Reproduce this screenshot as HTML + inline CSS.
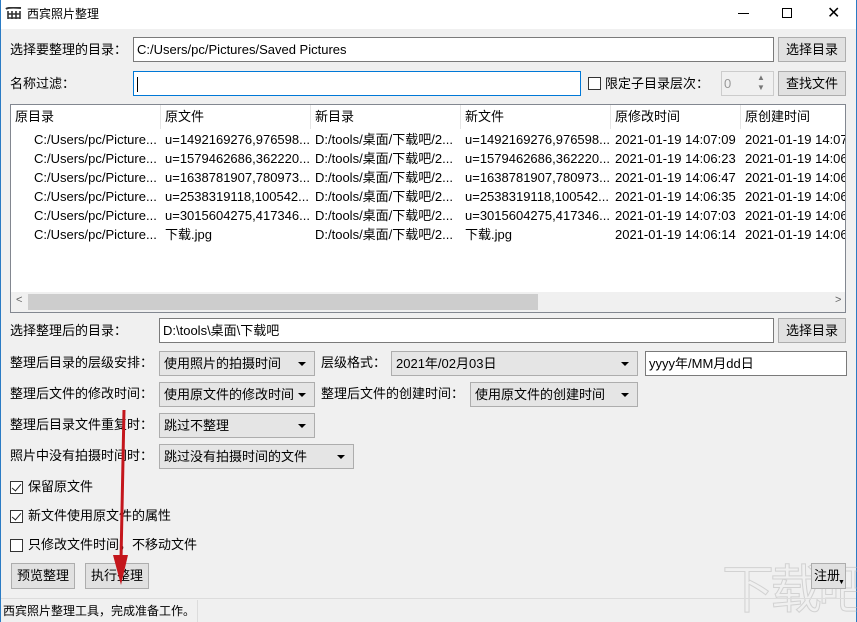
<!DOCTYPE html>
<html><head><meta charset="utf-8">
<style>
*{box-sizing:border-box;margin:0;padding:0}
body{width:857px;height:622px;overflow:hidden;background:#f0f0f0;font-family:"Liberation Sans","Noto Sans CJK SC",sans-serif;font-size:13px;color:#000;position:relative}
.a{position:absolute;white-space:nowrap}
.t{line-height:16px}
.in{position:absolute;background:#fff;border:1px solid #7a7a7a;padding-left:3px;line-height:23px;white-space:nowrap;overflow:hidden}
.bt{position:absolute;background:#e1e1e1;border:1px solid #adadad;text-align:center;line-height:23px;white-space:nowrap}
.sel{position:absolute;background:#e5e5e5;border:1px solid #adadad;padding-left:4px;line-height:23px;white-space:nowrap}
.sel:after{content:"";position:absolute;right:8px;top:10px;border-left:4px solid transparent;border-right:4px solid transparent;border-top:4px solid #000}
.cb{position:absolute;width:13px;height:13px;border:1px solid #333;background:#fff}
.cb.k:after{content:"";position:absolute;left:3px;top:0px;width:4px;height:8px;border:solid #222;border-width:0 1.5px 1.5px 0;transform:rotate(40deg)}
.hd{position:absolute;top:0;height:24px;line-height:24px;padding-left:4px;border-right:1px solid #e5e5e5}
.row{position:absolute;left:0;height:19px;line-height:19px}
.row span{position:absolute}
</style></head><body>
<div class="a" style="left:0;top:0;width:857px;height:29px;background:#fff"></div>
<div class="a" style="left:0;top:0;width:1px;height:622px;background:#2a7bc4"></div>
<div class="a" style="right:0;top:0;width:1px;height:622px;background:#2a7bc4"></div>
<svg class="a" style="left:5px;top:7px" width="17" height="13">
<path d="M1 2 Q3 0 16 1" stroke="#333" stroke-width="2" fill="none"/>
<path d="M3 4 V12 M7 4 V12 M11 4 V12 M15 4 V12 M3 7 H15 M3 11 H15" stroke="#333" stroke-width="1.6" fill="none"/>
</svg>
<div class="a t" style="left:27px;top:6px;font-size:12px">西宾照片整理</div>
<div class="a" style="left:738px;top:13px;width:11px;height:1px;background:#000"></div>
<div class="a" style="left:782px;top:8px;width:10px;height:10px;border:1px solid #000"></div>
<div class="a" style="left:827px;top:6px;font-size:16px;line-height:16px">✕</div>

<div class="a t" style="left:10px;top:42px">选择要整理的目录：</div>
<div class="in" style="left:133px;top:37px;width:641px;height:25px">C:/Users/pc/Pictures/Saved Pictures</div>
<div class="bt" style="left:778px;top:37px;width:68px;height:25px">选择目录</div>

<div class="a t" style="left:10px;top:76px">名称过滤：</div>
<div class="in" style="left:133px;top:71px;width:448px;height:25px;border-color:#0078d7"><span style="display:inline-block;width:1px;height:15px;background:#000;vertical-align:middle"></span></div>
<div class="cb" style="left:588px;top:77px"></div>
<div class="a t" style="left:605px;top:76px">限定子目录层次：</div>
<div class="in" style="left:721px;top:71px;width:53px;height:25px;background:#f0f0f0;border-color:#ccc;color:#999;padding-left:2px">0</div>
<div class="a" style="left:757px;top:73px;font-size:8px;color:#777;line-height:10px">▲<br>▼</div>
<div class="bt" style="left:778px;top:71px;width:68px;height:25px">查找文件</div>

<div class="a" style="left:10px;top:104px;width:836px;height:209px;background:#fff;border:1px solid #828790;overflow:hidden">
 <div class="hd" style="left:0;width:150px">原目录</div>
 <div class="hd" style="left:150px;width:150px">原文件</div>
 <div class="hd" style="left:300px;width:150px">新目录</div>
 <div class="hd" style="left:450px;width:150px">新文件</div>
 <div class="hd" style="left:600px;width:130px">原修改时间</div>
 <div class="hd" style="left:730px;width:110px">原创建时间</div>
 <div class="row" style="top:25px;width:840px"><span style="left:23px">C:/Users/pc/Picture...</span><span style="left:154px">u=1492169276,976598...</span><span style="left:304px">D:/tools/桌面/下载吧/2...</span><span style="left:454px">u=1492169276,976598...</span><span style="left:604px">2021-01-19 14:07:09</span><span style="left:734px">2021-01-19 14:07</span></div>
 <div class="row" style="top:44px;width:840px"><span style="left:23px">C:/Users/pc/Picture...</span><span style="left:154px">u=1579462686,362220...</span><span style="left:304px">D:/tools/桌面/下载吧/2...</span><span style="left:454px">u=1579462686,362220...</span><span style="left:604px">2021-01-19 14:06:23</span><span style="left:734px">2021-01-19 14:06</span></div>
 <div class="row" style="top:63px;width:840px"><span style="left:23px">C:/Users/pc/Picture...</span><span style="left:154px">u=1638781907,780973...</span><span style="left:304px">D:/tools/桌面/下载吧/2...</span><span style="left:454px">u=1638781907,780973...</span><span style="left:604px">2021-01-19 14:06:47</span><span style="left:734px">2021-01-19 14:06</span></div>
 <div class="row" style="top:82px;width:840px"><span style="left:23px">C:/Users/pc/Picture...</span><span style="left:154px">u=2538319118,100542...</span><span style="left:304px">D:/tools/桌面/下载吧/2...</span><span style="left:454px">u=2538319118,100542...</span><span style="left:604px">2021-01-19 14:06:35</span><span style="left:734px">2021-01-19 14:06</span></div>
 <div class="row" style="top:101px;width:840px"><span style="left:23px">C:/Users/pc/Picture...</span><span style="left:154px">u=3015604275,417346...</span><span style="left:304px">D:/tools/桌面/下载吧/2...</span><span style="left:454px">u=3015604275,417346...</span><span style="left:604px">2021-01-19 14:07:03</span><span style="left:734px">2021-01-19 14:06</span></div>
 <div class="row" style="top:120px;width:840px"><span style="left:23px">C:/Users/pc/Picture...</span><span style="left:154px">下载.jpg</span><span style="left:304px">D:/tools/桌面/下载吧/2...</span><span style="left:454px">下载.jpg</span><span style="left:604px">2021-01-19 14:06:14</span><span style="left:734px">2021-01-19 14:06</span></div>
 <div class="a" style="left:0;top:187px;width:834px;height:20px;background:#f0f0f0"></div>
 <div class="a" style="left:17px;top:189px;width:510px;height:16px;background:#cdcdcd"></div>
 <div class="a" style="left:5px;top:189px;font-size:11px;color:#606060">&lt;</div>
 <div class="a" style="left:824px;top:189px;font-size:11px;color:#606060">&gt;</div>
</div>

<div class="a t" style="left:10px;top:323px">选择整理后的目录：</div>
<div class="in" style="left:159px;top:318px;width:615px;height:25px">D:\tools\桌面\下载吧</div>
<div class="bt" style="left:778px;top:318px;width:68px;height:25px">选择目录</div>

<div class="a t" style="left:10px;top:355px">整理后目录的层级安排：</div>
<div class="sel" style="left:159px;top:351px;width:156px;height:25px">使用照片的拍摄时间</div>
<div class="a t" style="left:321px;top:355px">层级格式：</div>
<div class="sel" style="left:391px;top:351px;width:247px;height:25px">2021年/02月03日</div>
<div class="in" style="left:645px;top:351px;width:202px;height:25px">yyyy年/MM月dd日</div>

<div class="a t" style="left:10px;top:386px">整理后文件的修改时间：</div>
<div class="sel" style="left:159px;top:382px;width:156px;height:25px">使用原文件的修改时间</div>
<div class="a t" style="left:321px;top:386px">整理后文件的创建时间：</div>
<div class="sel" style="left:470px;top:382px;width:168px;height:25px">使用原文件的创建时间</div>

<div class="a t" style="left:10px;top:417px">整理后目录文件重复时：</div>
<div class="sel" style="left:159px;top:413px;width:156px;height:25px">跳过不整理</div>

<div class="a t" style="left:10px;top:448px">照片中没有拍摄时间时：</div>
<div class="sel" style="left:159px;top:444px;width:195px;height:25px">跳过没有拍摄时间的文件</div>

<div class="cb k" style="left:10px;top:481px"></div>
<div class="a t" style="left:28px;top:479px">保留原文件</div>
<div class="cb k" style="left:10px;top:510px"></div>
<div class="a t" style="left:28px;top:508px">新文件使用原文件的属性</div>
<div class="cb" style="left:10px;top:539px"></div>
<div class="a t" style="left:28px;top:537px">只修改文件时间，不移动文件</div>

<div class="a" style="left:722px;top:562px;font-size:52px;line-height:58px;color:transparent;-webkit-text-stroke:1px rgba(180,180,180,.5);letter-spacing:-4px">下载吧</div>

<div class="bt" style="left:11px;top:563px;width:64px;height:26px;line-height:24px">预览整理</div>
<div class="bt" style="left:85px;top:563px;width:64px;height:26px;line-height:24px">执行整理</div>
<div class="bt" style="left:811px;top:563px;width:35px;height:26px;line-height:24px;text-align:left;padding-left:2px">注册</div>
<div class="a" style="left:838px;top:579px;font-size:7px">▼</div>

<div class="a" style="left:1px;top:598px;width:855px;height:1px;background:#dcdcdc"></div>
<div class="a t" style="left:3px;top:603px;font-size:12px">西宾照片整理工具，完成准备工作。</div>
<div class="a" style="left:197px;top:600px;width:1px;height:22px;background:#dcdcdc"></div>

<svg class="a" style="left:0;top:0" width="857" height="622">
<path d="M124 410 L121 560" stroke="#c4161c" stroke-width="3" fill="none"/>
<path d="M113 555 L121 585 L128 555 Z" fill="#c4161c"/>
</svg>
</body></html>
